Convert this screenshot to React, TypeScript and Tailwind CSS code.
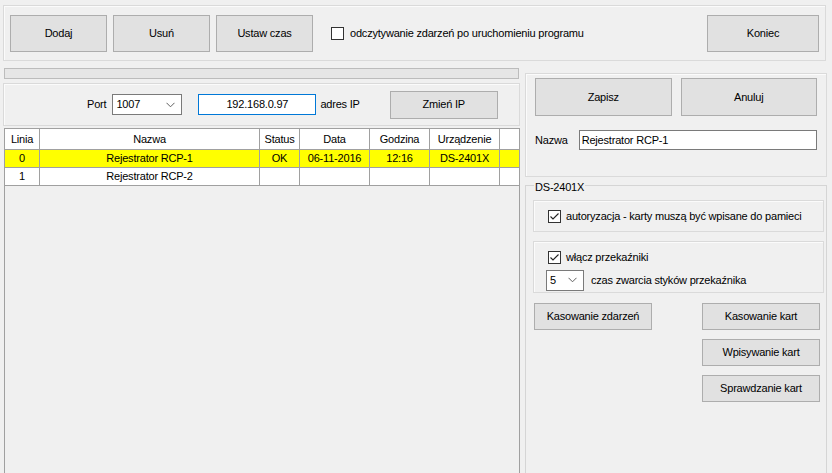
import React from "react";

const Button = ({
  label,
  className = "",
}: {
  label: string;
  className?: string;
}) => (
  <div
    className={`flex items-center justify-center border border-[#adadad] bg-[#e1e1e1] ${className}`}
  >
    {label}
  </div>
);

const CheckBox = ({ checked }: { checked?: boolean }) => (
  <div className="flex h-[13px] w-[13px] shrink-0 items-center justify-center border border-[#333333] bg-white">
    {checked && (
      <svg width="11" height="11" viewBox="0 0 11 11">
        <polyline
          points="1.5,5.5 4,8 9.5,2.5"
          fill="none"
          stroke="#222"
          strokeWidth="1.1"
        />
      </svg>
    )}
  </div>
);

const Chevron = () => (
  <svg width="9" height="6" viewBox="0 0 9 6">
    <polyline
      points="0.5,0.8 4.5,4.8 8.5,0.8"
      fill="none"
      stroke="#606060"
      strokeWidth="1"
    />
  </svg>
);

const ComboBox = ({ value, className = "" }: { value: string; className?: string }) => (
  <div
    className={`flex items-center justify-between border border-[#7a7a7a] bg-white pl-[3px] pr-[6px] ${className}`}
  >
    <span>{value}</span>
    <Chevron />
  </div>
);

const columns = [
  { name: "Linia", w: "w-[35px]" },
  { name: "Nazwa", w: "w-[220px]" },
  { name: "Status", w: "w-[40px]" },
  { name: "Data", w: "w-[70px]" },
  { name: "Godzina", w: "w-[60px]" },
  { name: "Urządzenie", w: "w-[70px]" },
  { name: "", w: "flex-1" },
];

const rows = [
  { cells: ["0", "Rejestrator RCP-1", "OK", "06-11-2016", "12:16", "DS-2401X", ""], selected: true },
  { cells: ["1", "Rejestrator RCP-2", "", "", "", "", ""], selected: false },
];

export default function App() {
  return (
    <div
      className="h-[473px] w-[832px] overflow-hidden bg-[#f0f0f0] text-[11px] tracking-[-0.2px] text-black"
      style={{ fontFamily: '"Liberation Sans", Arial, sans-serif' }}
    >
      {/* top bar */}
      <div className="px-[3px] pt-[5px]">
        <div className="flex h-[56px] w-[823px] items-start gap-[6px] border border-[#dadada] px-[6px] pt-[9px] shadow-[inset_1px_1px_0_#fbfbfb]">
          <Button label="Dodaj" className="h-[37px] w-[97px]" />
          <Button label="Usuń" className="h-[37px] w-[97px]" />
          <Button label="Ustaw czas" className="h-[37px] w-[97px]" />
          <div className="ml-[12px] flex h-[37px] items-center gap-[6px]">
            <CheckBox />
            <span>odczytywanie zdarzeń po uruchomieniu programu</span>
          </div>
          <Button label="Koniec" className="ml-auto mr-[0px] h-[37px] w-[112px]" />
        </div>
      </div>

      <div className="flex">
        {/* left column */}
        <div className="ml-[3px] flex w-[517px] flex-col">
          <div className="ml-[1px] mt-[7px] h-[11px] w-[515px] border border-[#bcbcbc] bg-[#e6e6e6]" />
          <div className="mt-[4px] flex h-[43px] w-[517px] items-center border border-[#dadada] shadow-[inset_1px_1px_0_#fbfbfb]">
            <span className="ml-[83px]">Port</span>
            <ComboBox value="1007" className="ml-[6px] h-[21px] w-[70px]" />
            <div className="ml-[16px] flex h-[21px] w-[118px] items-center justify-center border border-[#0078d7] bg-white">
              192.168.0.97
            </div>
            <span className="ml-[4px]">adres IP</span>
            <Button label="Zmień IP" className="ml-[30px] h-[28px] w-[108px]" />
          </div>
          <div className="ml-[1px] mt-[2px] flex h-[360px] w-[516px] flex-col border border-[#a0a0a0] bg-[#f0f0f0]">
            <div className="flex h-[21px] bg-white">
              {columns.map((c, i) => (
                <div
                  key={i}
                  className={`${c.w} flex items-center justify-center border-b border-r border-[#a0a0a0] last:border-r-0`}
                >
                  {c.name}
                </div>
              ))}
            </div>
            {rows.map((r, ri) => (
              <div
                key={ri}
                className={`flex h-[18px] ${r.selected ? "bg-[#ffff00]" : "bg-white"}`}
              >
                {r.cells.map((cell, ci) => (
                  <div
                    key={ci}
                    className={`${columns[ci].w} flex items-center justify-center border-b border-r border-[#a0a0a0] last:border-r-0`}
                  >
                    {cell}
                  </div>
                ))}
              </div>
            ))}
          </div>
        </div>

        {/* right column */}
        <div className="ml-[5px] flex w-[302px] flex-col">
          <div className="mt-[12px] h-[104px] border border-[#dadada] px-[9px] pt-[4px] shadow-[inset_1px_1px_0_#fbfbfb]">
            <div className="flex gap-[9px]">
              <Button label="Zapisz" className="h-[38px] w-[137px]" />
              <Button label="Anuluj" className="h-[38px] w-[137px]" />
            </div>
            <div className="mt-[14px] flex items-center">
              <span className="w-[44px]">Nazwa</span>
              <div className="flex h-[20px] w-[240px] items-center border border-[#7a7a7a] bg-white px-[2px]">
                Rejestrator RCP-1
              </div>
            </div>
          </div>

          <div className="relative mt-[8px] h-[300px] border border-[#d5d5d5] pl-[7px] pr-[2px] pt-[14px]">
            <span className="absolute -top-[7px] left-[8px] bg-[#f0f0f0] px-[1px]">
              DS-2401X
            </span>
            <div className="flex h-[32px] items-center gap-[5px] border border-[#dadada] pl-[14px] shadow-[inset_1px_1px_0_#fbfbfb]">
              <CheckBox checked />
              <span>autoryzacja - karty muszą być wpisane do pamieci</span>
            </div>
            <div className="mt-[9px] h-[52px] border border-[#dadada] pl-[12px] pt-[7px] shadow-[inset_1px_1px_0_#fbfbfb]">
              <div className="ml-[2px] flex items-center gap-[5px]">
                <CheckBox checked />
                <span>włącz przekaźniki</span>
              </div>
              <div className="mt-[4px] flex items-center">
                <ComboBox value="5" className="h-[21px] w-[38px]" />
                <span className="ml-[7px]">czas zwarcia styków przekaźnika</span>
              </div>
            </div>
            <div className="mt-[10px] flex justify-between pr-[4px]">
              <Button label="Kasowanie zdarzeń" className="ml-[1px] h-[27px] w-[118px]" />
              <div className="flex flex-col gap-[9px]">
                <Button label="Kasowanie kart" className="h-[27px] w-[118px]" />
                <Button label="Wpisywanie kart" className="h-[27px] w-[118px]" />
                <Button label="Sprawdzanie kart" className="h-[27px] w-[118px]" />
              </div>
            </div>
          </div>
        </div>
      </div>
    </div>
  );
}
